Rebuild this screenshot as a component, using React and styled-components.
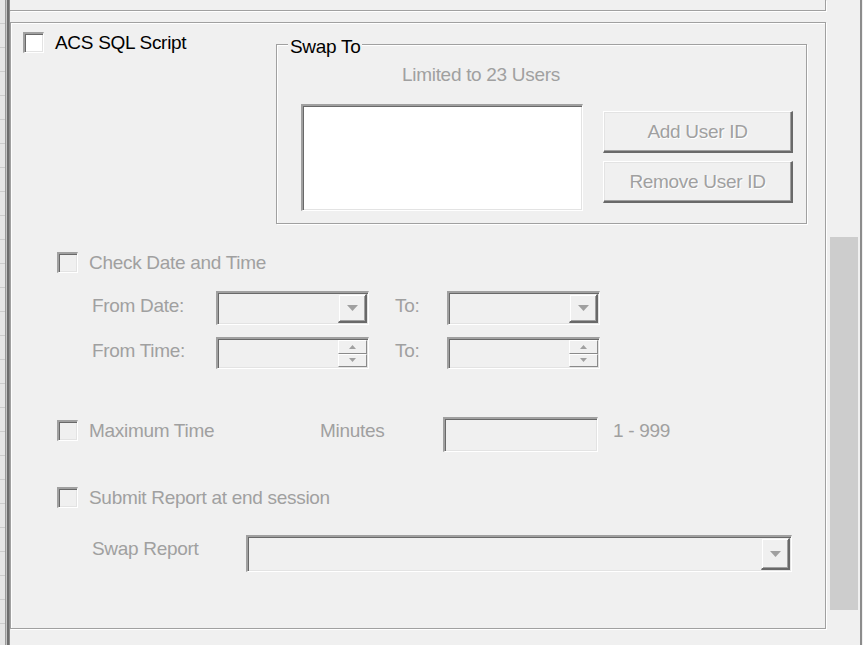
import React from "react";
import styled, { createGlobalStyle } from "styled-components";

const GlobalStyle = createGlobalStyle`
  html, body {
    margin: 0;
    padding: 0;
    background: #f0f0f0;
  }
  body {
    font-family: "Liberation Sans", Arial, sans-serif;
  }
`;

const Window = styled.div`
  display: flex;
  width: 863px;
  height: 645px;
  overflow: hidden;
  background: #f0f0f0;
  font-size: 19px;
  line-height: 20px;
  letter-spacing: -0.3px;
`;

const Gutter = styled.div`
  width: 5px;
  flex: none;
  background: repeating-linear-gradient(
    to bottom,
    #e6e6e6 0 23px,
    #cdcdcd 23px 24px
  );
`;

const Splitter = styled.div`
  width: 5px;
  flex: none;
  background: linear-gradient(
    to right,
    #9a9a9a 0 1px,
    #c4c4c4 1px 2px,
    #6d6d6d 2px 4px,
    #8c8c8c 4px 5px
  );
`;

const Main = styled.div`
  width: 817px;
  flex: none;
  display: flex;
  flex-direction: column;
`;

const TopStrip = styled.div`
  box-sizing: border-box;
  width: 816px;
  height: 11px;
  border-right: 1px solid #a0a0a0;
  border-bottom: 1px solid #a0a0a0;
  box-shadow: 1px 1px 0 #fff;
`;

const Panel = styled.div`
  box-sizing: border-box;
  width: 816px;
  height: 607px;
  margin-top: 11px;
  border: 1px solid #a0a0a0;
  box-shadow: inset 1px 1px 0 #fff, 1px 1px 0 #fff;
  display: flex;
  flex-direction: column;
`;

const ScrollCol = styled.div`
  flex: 1;
  display: flex;
`;

const Track = styled.div`
  width: 30px;
  padding-left: 3px;
  display: flex;
  flex-direction: column;
`;

const Thumb = styled.div`
  width: 28px;
  height: 373px;
  margin-top: 237px;
  background: #cdcdcd;
`;

const TrackEdge = styled.div`
  width: 2px;
  background: #8c8c8c;
`;

// form parts
const TopRow = styled.div`
  display: flex;
  justify-content: space-between;
  align-items: flex-start;
  padding: 0 18px 0 12px;
`;

const CheckRow = styled.div`
  display: flex;
  align-items: center;
  gap: 11px;
  flex: none;
  width: ${(p) => (p.$w ? `${p.$w}px` : "auto")};
  margin: ${(p) => p.$mt || 0}px 0 0 ${(p) => p.$ml || 0}px;
`;

const Check = styled.span`
  box-sizing: border-box;
  width: 21px;
  height: 21px;
  flex: none;
  background: ${(p) => (p.$disabled ? "#f0f0f0" : "#fff")};
  border-style: solid;
  border-width: 2px 1px 1px 2px;
  border-color: #a0a0a0 #fff #fff #a0a0a0;
  box-shadow: inset 1px 1px 0 #696969, inset -1px -1px 0 #e3e3e3;
`;

const Text = styled.span`
  color: ${(p) => (p.$disabled ? "#a0a0a0" : "#000")};
  white-space: nowrap;
  flex: none;
  width: ${(p) => (p.$w ? `${p.$w}px` : "auto")};
  margin: ${(p) => p.$mt || 0}px 0 0 ${(p) => p.$ml || 0}px;
`;

const GroupBox = styled.div`
  position: relative;
  box-sizing: border-box;
  width: 531px;
  margin-top: 21px;
  padding: 20px 13px 12px 24px;
  border: 1px solid #a0a0a0;
  box-shadow: inset 1px 1px 0 #fff, 1px 1px 0 #fff;
`;

const GroupLabel = styled.span`
  position: absolute;
  top: -8px;
  left: 11px;
  padding: 0 2px;
  background: #f0f0f0;
  color: #000;
`;

const Hint = styled.div`
  color: #a0a0a0;
  margin-left: 101px;
  height: 20px;
`;

const GroupBody = styled.div`
  display: flex;
  gap: 20px;
  margin-top: 19px;
`;

const ListBox = styled.div`
  box-sizing: border-box;
  width: 282px;
  height: 107px;
  background: #fff;
  border-style: solid;
  border-width: 2px 1px 1px 2px;
  border-color: #a0a0a0 #fff #fff #a0a0a0;
  box-shadow: inset 1px 1px 0 #696969, inset -1px -1px 0 #e3e3e3;
`;

const ButtonStack = styled.div`
  display: flex;
  flex-direction: column;
  gap: 8px;
  margin-top: 7px;
`;

const PushButton = styled.button`
  box-sizing: border-box;
  width: 190px;
  height: 42px;
  padding: 0;
  background: #f0f0f0;
  border-style: solid;
  border-width: 1px 2px 2px 1px;
  border-color: #fff #696969 #696969 #fff;
  box-shadow: inset -1px -1px 0 #a0a0a0, inset 1px 1px 0 #e3e3e3;
  font: inherit;
  letter-spacing: inherit;
  color: #a0a0a0;
  text-shadow: 1px 1px 0 #fff;
`;

const DateGrid = styled.div`
  display: grid;
  grid-template-columns: 124px 153px 78px 153px;
  grid-template-rows: 34px 32px;
  row-gap: 12px;
  align-items: center;
  margin: 18px 0 0 81px;
`;

const GridLabel = styled.span`
  color: #a0a0a0;
  white-space: nowrap;
  padding-left: ${(p) => p.$pl || 0}px;
  margin-bottom: 5px;
`;

const Field = styled.div`
  box-sizing: border-box;
  display: flex;
  justify-content: flex-end;
  width: ${(p) => p.$w}px;
  height: ${(p) => p.$h}px;
  padding: 1px;
  background: #f0f0f0;
  border-style: solid;
  border-width: 2px 1px 1px 2px;
  border-color: #a0a0a0 #fff #fff #a0a0a0;
  box-shadow: inset 1px 1px 0 #696969, inset -1px -1px 0 #e3e3e3;
`;

const DropButton = styled.div`
  box-sizing: border-box;
  width: 29px;
  display: flex;
  align-items: center;
  justify-content: center;
  background: #f0f0f0;
  border-style: solid;
  border-width: 1px 2px 2px 1px;
  border-color: #f0f0f0 #696969 #696969 #f0f0f0;
  box-shadow: inset 1px 1px 0 #fff, inset -1px -1px 0 #a0a0a0;
`;

const SpinStack = styled.div`
  width: 29px;
  display: flex;
  flex-direction: column;
`;

const SpinButton = styled.div`
  box-sizing: border-box;
  flex: 1;
  display: flex;
  align-items: center;
  justify-content: center;
  background: #f0f0f0;
  border-style: solid;
  border-width: 1px 1px 1px 1px;
  border-color: #fff #8a8a8a #8a8a8a #fff;
`;

const OptionRow = styled.div`
  display: flex;
  align-items: flex-start;
  margin: ${(p) => p.$mt}px 0 0 ${(p) => p.$ml}px;
`;

const InputWrap = styled.div`
  flex: none;
`;

const Arrow = ({ up, small }) => {
  const w = small ? 7 : 11;
  const h = small ? 4 : 6;
  const pts = up ? `0,${h} ${w},${h} ${w / 2},0` : `0,0 ${w},0 ${w / 2},${h}`;
  return (
    <svg width={w} height={h} viewBox={`0 0 ${w} ${h}`}>
      <polygon points={pts} fill="#a0a0a0" />
    </svg>
  );
};

const Combo = ({ w, h }) => (
  <Field $w={w} $h={h}>
    <DropButton>
      <Arrow />
    </DropButton>
  </Field>
);

const Spinner = ({ w, h }) => (
  <Field $w={w} $h={h}>
    <SpinStack>
      <SpinButton>
        <Arrow up small />
      </SpinButton>
      <SpinButton>
        <Arrow small />
      </SpinButton>
    </SpinStack>
  </Field>
);

export default function App() {
  return (
    <>
      <GlobalStyle />
      <Window>
        <Gutter />
        <Splitter />
        <Main>
          <TopStrip />
          <Panel>
            <TopRow>
              <CheckRow $mt={9}>
                <Check />
                <Text>ACS SQL Script</Text>
              </CheckRow>
              <GroupBox>
                <GroupLabel>Swap To</GroupLabel>
                <Hint>Limited to 23 Users</Hint>
                <GroupBody>
                  <ListBox />
                  <ButtonStack>
                    <PushButton disabled>Add User ID</PushButton>
                    <PushButton disabled>Remove User ID</PushButton>
                  </ButtonStack>
                </GroupBody>
              </GroupBox>
            </TopRow>

            <CheckRow $mt={28} $ml={46}>
              <Check $disabled />
              <Text $disabled>Check Date and Time</Text>
            </CheckRow>

            <DateGrid>
              <GridLabel>From Date:</GridLabel>
              <Combo w={153} h={34} />
              <GridLabel $pl={26}>To:</GridLabel>
              <Combo w={153} h={34} />
              <GridLabel>From Time:</GridLabel>
              <Spinner w={153} h={32} />
              <GridLabel $pl={26}>To:</GridLabel>
              <Spinner w={153} h={32} />
            </DateGrid>

            <OptionRow $mt={48} $ml={46}>
              <CheckRow $mt={3} $w={263}>
                <Check $disabled />
                <Text $disabled>Maximum Time</Text>
              </CheckRow>
              <Text $disabled $w={123} $mt={4}>
                Minutes
              </Text>
              <InputWrap>
                <Field $w={155} $h={35} />
              </InputWrap>
              <Text $disabled $mt={4} $ml={15}>
                1 - 999
              </Text>
            </OptionRow>

            <CheckRow $mt={35} $ml={46}>
              <Check $disabled />
              <Text $disabled>Submit Report at end session</Text>
            </CheckRow>

            <OptionRow $mt={27} $ml={81}>
              <Text $disabled $w={154} $mt={4}>
                Swap Report
              </Text>
              <Combo w={546} h={37} />
            </OptionRow>
          </Panel>
        </Main>
        <ScrollCol>
          <Track>
            <Thumb />
          </Track>
          <TrackEdge />
        </ScrollCol>
      </Window>
    </>
  );
}
